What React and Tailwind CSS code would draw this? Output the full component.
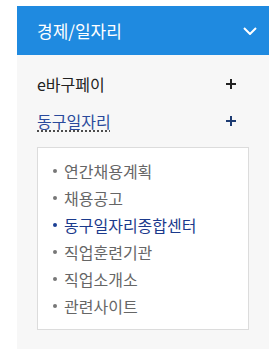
const subMenu = [
  { label: "연간채용계획" },
  { label: "채용공고" },
  { label: "동구일자리종합센터", active: true },
  { label: "직업훈련기관" },
  { label: "직업소개소" },
  { label: "관련사이트" },
];

const Plus = ({ color }) => (
  <svg width="10" height="10" viewBox="0 0 10 10" fill="none">
    <path d="M5 0V10M0 5H10" stroke={color} strokeWidth="2" />
  </svg>
);

const App = () => {
  return (
    <div
      className="w-[269px] h-[349px] bg-white pt-[6px] pl-[17px] overflow-hidden"
      style={{ fontFamily: '"Noto Sans CJK KR", "Noto Sans", sans-serif' }}
    >
      {/* Header */}
      <div className="h-[49px] bg-[#1f8ae0] flex items-center justify-between pl-[20px] pr-[12px]">
        <span className="text-white text-[17px] leading-none">경제/일자리</span>
        <svg width="14" height="8" viewBox="0 0 14 8" fill="none">
          <path d="M1 1L7 7L13 1" stroke="#fff" strokeWidth="2" />
        </svg>
      </div>

      {/* Body */}
      <div className="bg-[#f7f7f7] h-full pt-[10px] px-[20px]">
        <div className="h-[37px] flex items-center justify-between pr-[13px]">
          <span className="text-[16px] text-[#222] leading-none">e바구페이</span>
          <Plus color="#222" />
        </div>
        <div className="h-[37px] flex items-center justify-between pr-[13px]">
          <span className="text-[16px] text-[#2a4a9c] leading-[20px] underline decoration-dotted decoration-[#222] underline-offset-[3px]">
            동구일자리
          </span>
          <Plus color="#1d3b72" />
        </div>

        {/* Sub menu */}
        <ul className="mt-[8px] bg-white border border-[#dcdcdc] pt-[9px] pb-[10px] pl-[15px]">
          {subMenu.map((m) => (
            <li key={m.label} className="h-[27px] flex items-center">
              <span
                className={`w-[4px] h-[4px] rounded-full mr-[7px] ${
                  m.active ? "bg-[#1b3f94]" : "bg-[#777]"
                }`}
              />
              <span
                className={`text-[16px] leading-none ${
                  m.active ? "text-[#1b3a8c]" : "text-[#666]"
                }`}
              >
                {m.label}
              </span>
            </li>
          ))}
        </ul>
      </div>
    </div>
  );
};

export default App;
